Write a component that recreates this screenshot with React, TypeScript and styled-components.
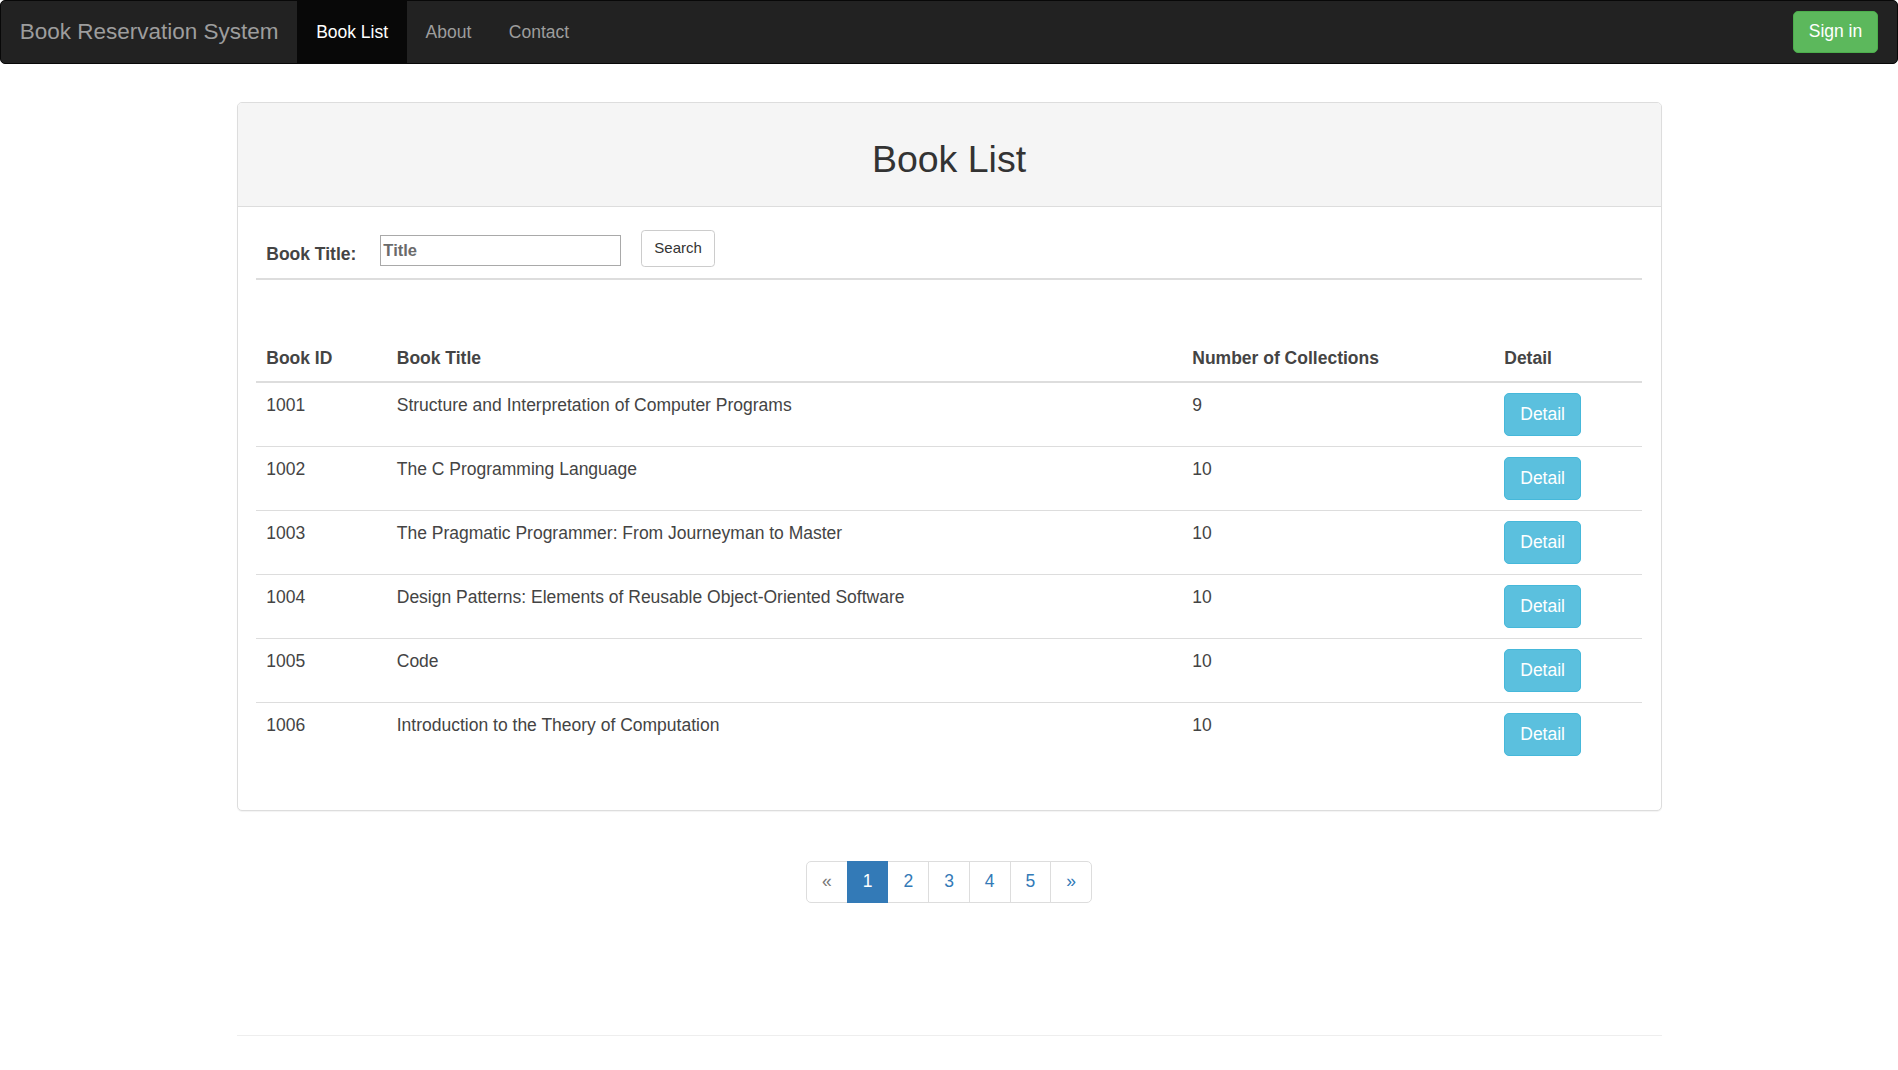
import React from "react";
import styled, { createGlobalStyle } from "styled-components";

const GlobalStyle = createGlobalStyle`
  html, body {
    margin: 0;
    padding: 0;
    background: #fff;
  }
  body {
    font-family: "Liberation Sans", Arial, Helvetica, sans-serif;
    font-size: 17.5px;
    line-height: 25px;
    color: #333;
  }
  *, *::before, *::after { box-sizing: border-box; }
`;

const Navbar = styled.nav`
  display: flex;
  align-items: center;
  height: 64px;
  background: #222;
  border: 1px solid #080808;
  border-radius: 5px;
  padding: 0 18.75px 0 0;
`;

const Brand = styled.a`
  display: block;
  padding: 0 18.75px;
  font-size: 22.5px;
  line-height: 62px;
  color: #9d9d9d;
  text-decoration: none;
  white-space: nowrap;
`;

const NavList = styled.ul`
  display: flex;
  margin: 0;
  padding: 0;
  list-style: none;
`;

const NavLink = styled.a<{ $active?: boolean }>`
  display: block;
  padding: 0 18.75px;
  line-height: 62px;
  font-size: 17.5px;
  text-decoration: none;
  color: ${(p) => (p.$active ? "#fff" : "#9d9d9d")};
  background: ${(p) => (p.$active ? "#080808" : "transparent")};
`;

const SignIn = styled.button`
  margin-left: auto;
  margin-bottom: 1px;
  font-family: inherit;
  font-size: 17.5px;
  line-height: 25px;
  padding: 7.5px 15px;
  color: #fff;
  background: #5cb85c;
  border: 1px solid #4cae4c;
  border-radius: 5px;
  cursor: pointer;
`;

const Container = styled.main`
  width: 1462.5px;
  margin: 0 auto;
  padding: 0 18.75px;
`;

const Panel = styled.section`
  margin-top: 37.5px;
  margin-bottom: 25px;
  background: #fff;
  border: 1px solid #ddd;
  border-radius: 5px;
  box-shadow: 0 1px 1px rgba(0, 0, 0, 0.05);
`;

const PanelHeading = styled.header`
  background: #f5f5f5;
  border-bottom: 1px solid #ddd;
  border-radius: 4px 4px 0 0;
  padding: 36.5px 18.75px 25.75px;
  text-align: center;
`;

const Title = styled.h1`
  margin: 0;
  font-size: 37.5px;
  line-height: 41.25px;
  font-weight: 500;
  color: #333;
`;

const PanelBody = styled.div`
  padding: 18.75px;
  color: #444;
`;

const SearchRow = styled.form`
  display: flex;
  align-items: flex-end;
  padding: 4.25px 10px 11px;
  border-bottom: 2px solid #ddd;
`;

const SearchLabel = styled.label`
  font-weight: bold;
  line-height: 25px;
  margin-right: 23.5px;
`;

const TitleInput = styled.input`
  width: 241px;
  height: 31.5px;
  margin: 0 20px 1px 0;
  padding: 1px 2.5px;
  border: 1px solid #a9a9a9;
  font-family: inherit;
  font-size: 16.5px;
  font-weight: bold;
  color: #333;
  &::placeholder {
    color: #6a6a6a;
    opacity: 1;
  }
`;

const SmallButton = styled.button`
  font-family: inherit;
  font-size: 15px;
  line-height: 22.5px;
  padding: 6.25px 12.5px;
  color: #333;
  background: #fff;
  border: 1px solid #ccc;
  border-radius: 3.75px;
  cursor: pointer;
`;

const Table = styled.table`
  width: 100%;
  margin-top: 56px;
  margin-bottom: 25px;
  border-collapse: collapse;
  border-spacing: 0;
  table-layout: fixed;
`;

const Th = styled.th<{ $w?: number }>`
  width: ${(p) => (p.$w ? `${p.$w}px` : "auto")};
  text-align: left;
  font-weight: bold;
  padding: 10px;
  line-height: 25px;
  vertical-align: bottom;
  border-bottom: 2px solid #ddd;
`;

const Td = styled.td`
  padding: 10px;
  line-height: 25px;
  vertical-align: top;
  border-top: 1px solid #ddd;
`;

const DetailButton = styled.button`
  font-family: inherit;
  font-size: 17.5px;
  line-height: 25px;
  padding: 8px 15px;
  color: #fff;
  background: #5bc0de;
  border: 1px solid #46b8da;
  border-radius: 5px;
  cursor: pointer;
`;

const PagerWrap = styled.nav`
  display: flex;
  justify-content: center;
  margin-top: 50px;
`;

const Pager = styled.ul`
  display: flex;
  margin: 0;
  padding: 0;
  list-style: none;
`;

const PageItem = styled.li`
  margin-left: -1px;
  &:first-child {
    margin-left: 0;
  }
  &:first-child a {
    border-radius: 5px 0 0 5px;
  }
  &:last-child a {
    border-radius: 0 5px 5px 0;
  }
`;

const PageLink = styled.a<{ $active?: boolean; $disabled?: boolean }>`
  position: relative;
  display: block;
  padding: 7.5px 15px;
  line-height: 25px;
  font-size: 17.5px;
  text-decoration: none;
  color: ${(p) => (p.$active ? "#fff" : p.$disabled ? "#777" : "#337ab7")};
  background: ${(p) => (p.$active ? "#337ab7" : "#fff")};
  border: 1px solid ${(p) => (p.$active ? "#337ab7" : "#ddd")};
  z-index: ${(p) => (p.$active ? 2 : 0)};
`;

const FooterRule = styled.hr`
  margin: 132.5px 0 25px;
  border: 0;
  border-top: 1.25px solid #eee;
`;

const books = [
  { id: 1001, title: "Structure and Interpretation of Computer Programs", count: 9 },
  { id: 1002, title: "The C Programming Language", count: 10 },
  { id: 1003, title: "The Pragmatic Programmer: From Journeyman to Master", count: 10 },
  { id: 1004, title: "Design Patterns: Elements of Reusable Object-Oriented Software", count: 10 },
  { id: 1005, title: "Code", count: 10 },
  { id: 1006, title: "Introduction to the Theory of Computation", count: 10 },
];

const pages = ["«", "1", "2", "3", "4", "5", "»"];

export default function App() {
  return (
    <>
      <GlobalStyle />
      <Navbar>
        <Brand href="#">Book Reservation System</Brand>
        <NavList>
          <li><NavLink href="#" $active>Book List</NavLink></li>
          <li><NavLink href="#">About</NavLink></li>
          <li><NavLink href="#">Contact</NavLink></li>
        </NavList>
        <SignIn type="button">Sign in</SignIn>
      </Navbar>
      <Container>
        <Panel>
          <PanelHeading>
            <Title>Book List</Title>
          </PanelHeading>
          <PanelBody>
            <SearchRow onSubmit={(e) => e.preventDefault()}>
              <SearchLabel htmlFor="title">Book Title:</SearchLabel>
              <TitleInput id="title" type="text" placeholder="Title" />
              <SmallButton type="submit">Search</SmallButton>
            </SearchRow>
            <Table>
              <thead>
                <tr>
                  <Th $w={130.5}>Book ID</Th>
                  <Th $w={795.5}>Book Title</Th>
                  <Th $w={312}>Number of Collections</Th>
                  <Th>Detail</Th>
                </tr>
              </thead>
              <tbody>
                {books.map((b) => (
                  <tr key={b.id}>
                    <Td>{b.id}</Td>
                    <Td>{b.title}</Td>
                    <Td>{b.count}</Td>
                    <Td>
                      <DetailButton type="button">Detail</DetailButton>
                    </Td>
                  </tr>
                ))}
              </tbody>
            </Table>
          </PanelBody>
        </Panel>
        <PagerWrap>
          <Pager>
            {pages.map((p) => (
              <PageItem key={p}>
                <PageLink href="#" $active={p === "1"} $disabled={p === "«"}>
                  {p}
                </PageLink>
              </PageItem>
            ))}
          </Pager>
        </PagerWrap>
        <FooterRule />
      </Container>
    </>
  );
}
